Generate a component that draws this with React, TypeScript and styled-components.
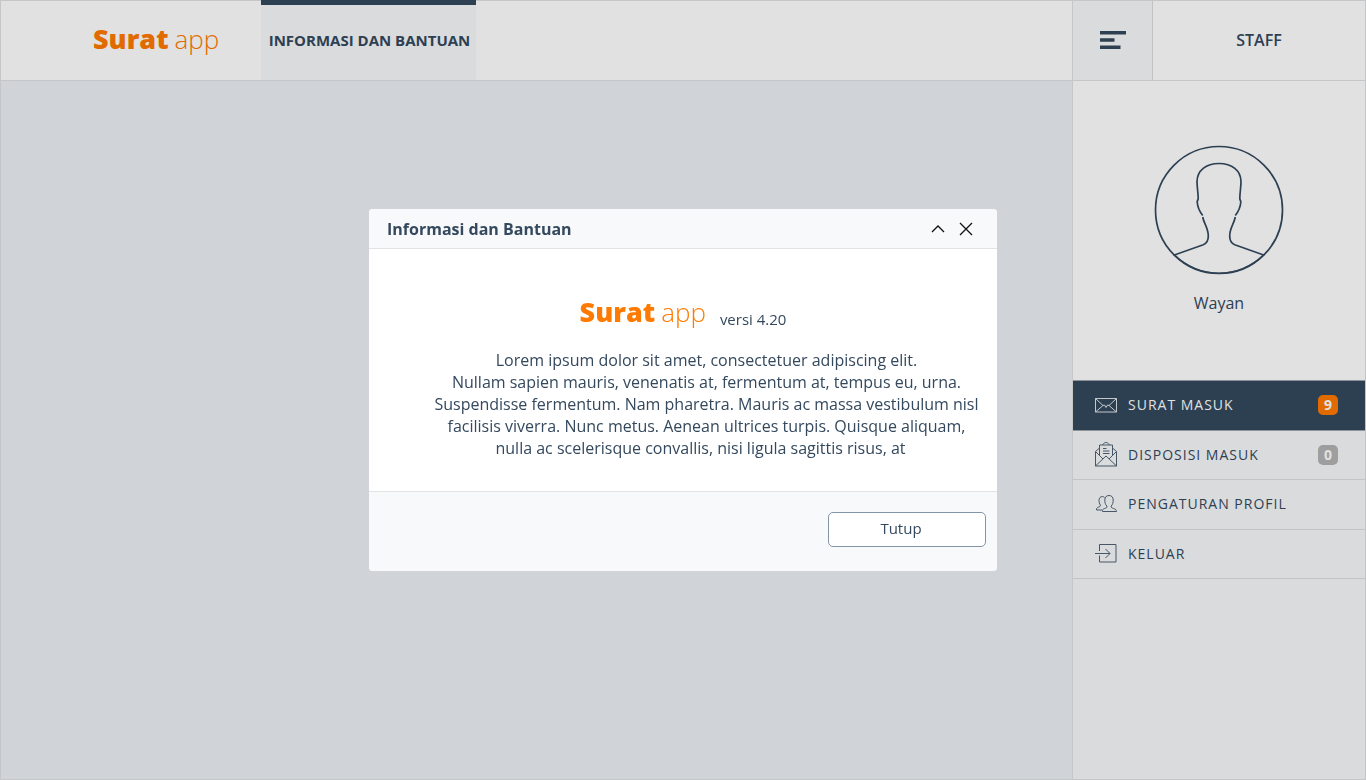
import React from "react";
import styled, { createGlobalStyle } from "styled-components";

const navy = "#34495e";
const orange = "#ff7a00";
const line = "#e0e1e3";
const panel = "#f8f9fb";

const GlobalStyle = createGlobalStyle`
  *, *::before, *::after { box-sizing: border-box; }
  body {
    margin: 0;
    background: #ecf0f5;
    color: ${navy};
    font-family: "Open Sans", "Noto Sans", sans-serif;
    font-size: 16px;
    line-height: 22px;
  }
  button { font: inherit; color: inherit; cursor: pointer; }
  a { color: inherit; text-decoration: none; }
`;

const Page = styled.div`
  display: flex;
  min-height: 100vh;
  border: 1px solid ${line};
`;

const Content = styled.div`
  flex: 1;
  min-width: 0;
`;

const TopBar = styled.header`
  display: flex;
  height: 80px;
  background: #fff;
  border-bottom: 1px solid ${line};
`;

const Brand = styled.a`
  display: flex;
  align-items: center;
  width: 260px;
  padding: 0 0 4px 92px;
`;

const LogoText = styled.span`
  display: inline-flex;
  align-items: baseline;
  gap: 6px;
  color: ${orange};
  font-size: 27px;
  line-height: 32px;
  font-weight: 800;
  white-space: nowrap;
`;

const LogoLight = styled.span`
  font-size: 26px;
  font-weight: 300;
`;

const Tab = styled.a`
  display: flex;
  align-items: center;
  justify-content: center;
  width: 215px;
  margin-top: -1px;
  padding: 0 0 6px 2px;
  border-top: 5px solid ${navy};
  background: ${panel};
  font-size: 15px;
  font-weight: 700;
  white-space: nowrap;
`;

const Sidebar = styled.aside`
  display: flex;
  flex-direction: column;
  width: 293px;
  border-left: 1px solid ${line};
  background: ${panel};
`;

const MenuButton = styled.button`
  display: flex;
  align-items: center;
  justify-content: center;
  width: 80px;
  padding: 0 0 2px;
  border: 0;
  border-right: 1px solid #dcdcdc;
  background: ${panel};
`;

const Role = styled.div`
  display: flex;
  flex: 1;
  align-items: center;
  justify-content: center;
  padding-bottom: 2px;
  font-weight: 600;
`;

const Profile = styled.section`
  display: flex;
  flex-direction: column;
  align-items: center;
  gap: 17px;
  min-height: 299px;
  padding-top: 64px;
  background: #fff;
`;

const Menu = styled.ul`
  display: grid;
  grid-auto-rows: 1fr;
  min-height: 199px;
  margin: 0;
  padding: 0;
  border-top: 1px solid #a0a7ae;
  list-style: none;
`;

const MenuItem = styled.li`
  display: flex;
`;

const MenuLink = styled.a<{ $active?: boolean }>`
  display: flex;
  flex: 1;
  align-items: center;
  padding: 0 27px 0 20px;
  border-bottom: 1px solid ${(p) => (p.$active ? "#a0a7ae" : "#dfdfe0")};
  background: ${(p) => (p.$active ? navy : "transparent")};
  color: ${(p) => (p.$active ? "#fff" : navy)};
  font-size: 14px;
  letter-spacing: 1px;
`;

const MenuIcon = styled.span`
  display: flex;
  align-items: center;
  justify-content: center;
  width: 26px;
  margin-right: 9px;
  opacity: 0.85;
`;

const Badge = styled.span<{ $muted?: boolean }>`
  width: 20px;
  margin-left: auto;
  border-radius: 5px;
  background: ${(p) => (p.$muted ? "#b4b4b4" : orange)};
  color: #fff;
  font-size: 14px;
  font-weight: 700;
  line-height: 20px;
  letter-spacing: 0;
  text-align: center;
`;

const Backdrop = styled.div`
  position: fixed;
  inset: 0;
  display: flex;
  align-items: center;
  justify-content: center;
  background: rgba(0, 0, 0, 0.118);
`;

const Dialog = styled.section`
  width: 628px;
  max-width: 96vw;
  overflow: hidden;
  border-radius: 4px;
  background: #fff;
`;

const DialogHeader = styled.header`
  display: flex;
  align-items: center;
  gap: 12px;
  height: 40px;
  padding: 0 23px 0 18px;
  border-bottom: 1px solid #e1e3e5;
  background: ${panel};
`;

const DialogTitle = styled.h2`
  flex: 1;
  margin: 0;
  font-size: 16px;
  font-weight: 700;
`;

const IconButton = styled.button`
  display: flex;
  padding: 1px;
  border: 0;
  background: none;
`;

const DialogBody = styled.div`
  padding: 47px 18px 32px 65px;
`;

const VersionRow = styled.div`
  display: flex;
  align-items: flex-end;
  justify-content: center;
  gap: 14px;
  margin: 0 47px 21px 0;
`;

const Version = styled.span`
  font-size: 15px;
  line-height: 18px;
`;

const About = styled.p`
  margin: 0;
  text-align: center;
  white-space: nowrap;
`;

const LastLine = styled.span`
  padding-right: 12px;
`;

const DialogFooter = styled.footer`
  display: flex;
  justify-content: flex-end;
  padding: 20px 11px 24px;
  border-top: 1px solid #e1e3e5;
  background: ${panel};
`;

const CloseButton = styled.button`
  width: 158px;
  height: 35px;
  padding: 0 12px 4px 0;
  border: 1px solid #8595a8;
  border-radius: 5px;
  background: #fff;
  font-size: 15px;
`;

const Logo = () => (
  <LogoText>
    Surat <LogoLight>app</LogoLight>
  </LogoText>
);

const stroke = { fill: "none", stroke: "currentColor", "aria-hidden": true } as const;

const MailIcon = () => (
  <svg width="22" height="15" viewBox="0 0 22 15" {...stroke}>
    <path d="M.5 .5h21v13.500h-21zM.5 .5l7.500 7 1.500-.5 1.500 2.500 1.500-2.500 1.500 .5 7.500-7M.5 14l7.500-6.500M21.500 14l-7.500-6.500" />
  </svg>
);

const OpenMailIcon = () => (
  <svg width="22" height="25" viewBox="0 0 22 25" {...stroke}>
    <path d="M4.500 6L.5 9.500V24h21V9.500L17.500 6M4.500 13V3h13v10M7.500 3C8.500 1.200 10 .5 11 .5s2.500 .7 3.500 2.500M.5 9.500l7.500 7.500M21.500 9.500L14 17M.5 24L11 14l10.500 10M8 6.500h3.500M8 9h6.500M8 11.500h6.500" />
  </svg>
);

const PeopleIcon = () => (
  <svg width="22" height="18" viewBox="0 0 22 18" {...stroke}>
    <path d="M7.500 16.500c-.5-1.500 .5-2.500 2-3 2-.7 3-.7 2.300-2.500-1.500-1.500-2-3.500-2-6C9.800 2 11.500 .5 14 .5S18.200 2 18.200 5c0 2.500-.5 4.500-2 6-.3 1.800 .7 1.800 2.300 2.500 2 .5 3 1.500 3 3z" />
    <path d="M7 15H1.600c-.3-1.500 .4-2.300 1.700-2.800 1.500-.6 2.400-.7 2-2.200C4.400 8.700 4 7.200 4 5.400 4 3 5.300 1.600 7.300 1.600c1 0 1.700 .3 2.200 .8" />
  </svg>
);

const ExitIcon = () => (
  <svg width="22" height="19" viewBox="0 0 22 19" {...stroke}>
    <path d="M4.500 7V.5h16.500v17.500H4.500V11.500M0 9.500h15M10.500 5l4.500 4.500-4.500 4.500" />
  </svg>
);

const Avatar = () => (
  <svg width="130" height="130" viewBox="0 0 130 130" {...stroke} strokeWidth="1.7">
    <circle cx="65" cy="65" r="63.500" />
    <path d="M48.700 70.500C46 67 43.500 61.500 43.200 57c0-1.500 1-2 1-3.500C44.200 48 43 42 43 36.500 43.200 25.500 52 18.500 65 18.500s21.800 7 22 18C87 42 85.800 48 85.800 53.500c0 1.500 1 2 1 3.500-.3 4.500-2.800 10-5.500 13.500" />
    <path d="M48.700 72C50 79 54.300 83 54.300 91c0 5-2 7.500-5 8.700L20.300 110c26 24.300 63.400 24.300 89.400 0L80.700 99.700c-3-1.200-5-3.700-5-8.700 0-8 4.300-12 5.600-19" />
  </svg>
);

const items = [
  { label: "SURAT MASUK", icon: <MailIcon />, count: 9, active: true },
  { label: "DISPOSISI MASUK", icon: <OpenMailIcon />, count: 0 },
  { label: "PENGATURAN PROFIL", icon: <PeopleIcon /> },
  { label: "KELUAR", icon: <ExitIcon /> },
];

export default function App() {
  return (
    <>
      <GlobalStyle />
      <Page>
        <Content>
          <TopBar>
            <Brand href="#">
              <Logo />
            </Brand>
            <Tab href="#">INFORMASI DAN BANTUAN</Tab>
          </TopBar>
        </Content>
        <Sidebar>
          <TopBar>
            <MenuButton aria-label="Menu">
              <svg width="26" height="20" viewBox="0 0 26 20" fill="currentColor" aria-hidden="true">
                <path d="M0 1h26v3.500H0zM0 8.200h14.500v3.500H0zM0 15.500h20.500V19H0z" />
              </svg>
            </MenuButton>
            <Role>STAFF</Role>
          </TopBar>
          <Profile>
            <Avatar />
            <span>Wayan</span>
          </Profile>
          <nav>
            <Menu>
              {items.map((item) => (
                <MenuItem key={item.label}>
                  <MenuLink href="#" $active={item.active}>
                    <MenuIcon>{item.icon}</MenuIcon>
                    {item.label}
                    {item.count !== undefined && <Badge $muted={item.count === 0}>{item.count}</Badge>}
                  </MenuLink>
                </MenuItem>
              ))}
            </Menu>
          </nav>
        </Sidebar>
      </Page>
      <Backdrop>
        <Dialog role="dialog" aria-modal="true" aria-labelledby="dialog-title">
          <DialogHeader>
            <DialogTitle id="dialog-title">Informasi dan Bantuan</DialogTitle>
            <IconButton aria-label="Ciutkan">
              <svg width="14" height="14" viewBox="0 0 14 14" {...stroke} stroke="#111" strokeWidth="1.300">
                <path d="M1 10l6-6 6 6" />
              </svg>
            </IconButton>
            <IconButton aria-label="Tutup dialog">
              <svg width="14" height="14" viewBox="0 0 14 14" {...stroke} stroke="#111" strokeWidth="1.300">
                <path d="M1 1l12 12M13 1L1 13" />
              </svg>
            </IconButton>
          </DialogHeader>
          <DialogBody>
            <VersionRow>
              <Logo />
              <Version>versi 4.20</Version>
            </VersionRow>
            <About>
              Lorem ipsum dolor sit amet, consectetuer adipiscing elit.
              <br />
              Nullam sapien mauris, venenatis at, fermentum at, tempus eu, urna.
              <br />
              Suspendisse fermentum. Nam pharetra. Mauris ac massa vestibulum nisl
              <br />
              facilisis viverra. Nunc metus. Aenean ultrices turpis. Quisque aliquam,
              <br />
              <LastLine>nulla ac scelerisque convallis, nisi ligula sagittis risus, at</LastLine>
            </About>
          </DialogBody>
          <DialogFooter>
            <CloseButton>Tutup</CloseButton>
          </DialogFooter>
        </Dialog>
      </Backdrop>
    </>
  );
}
